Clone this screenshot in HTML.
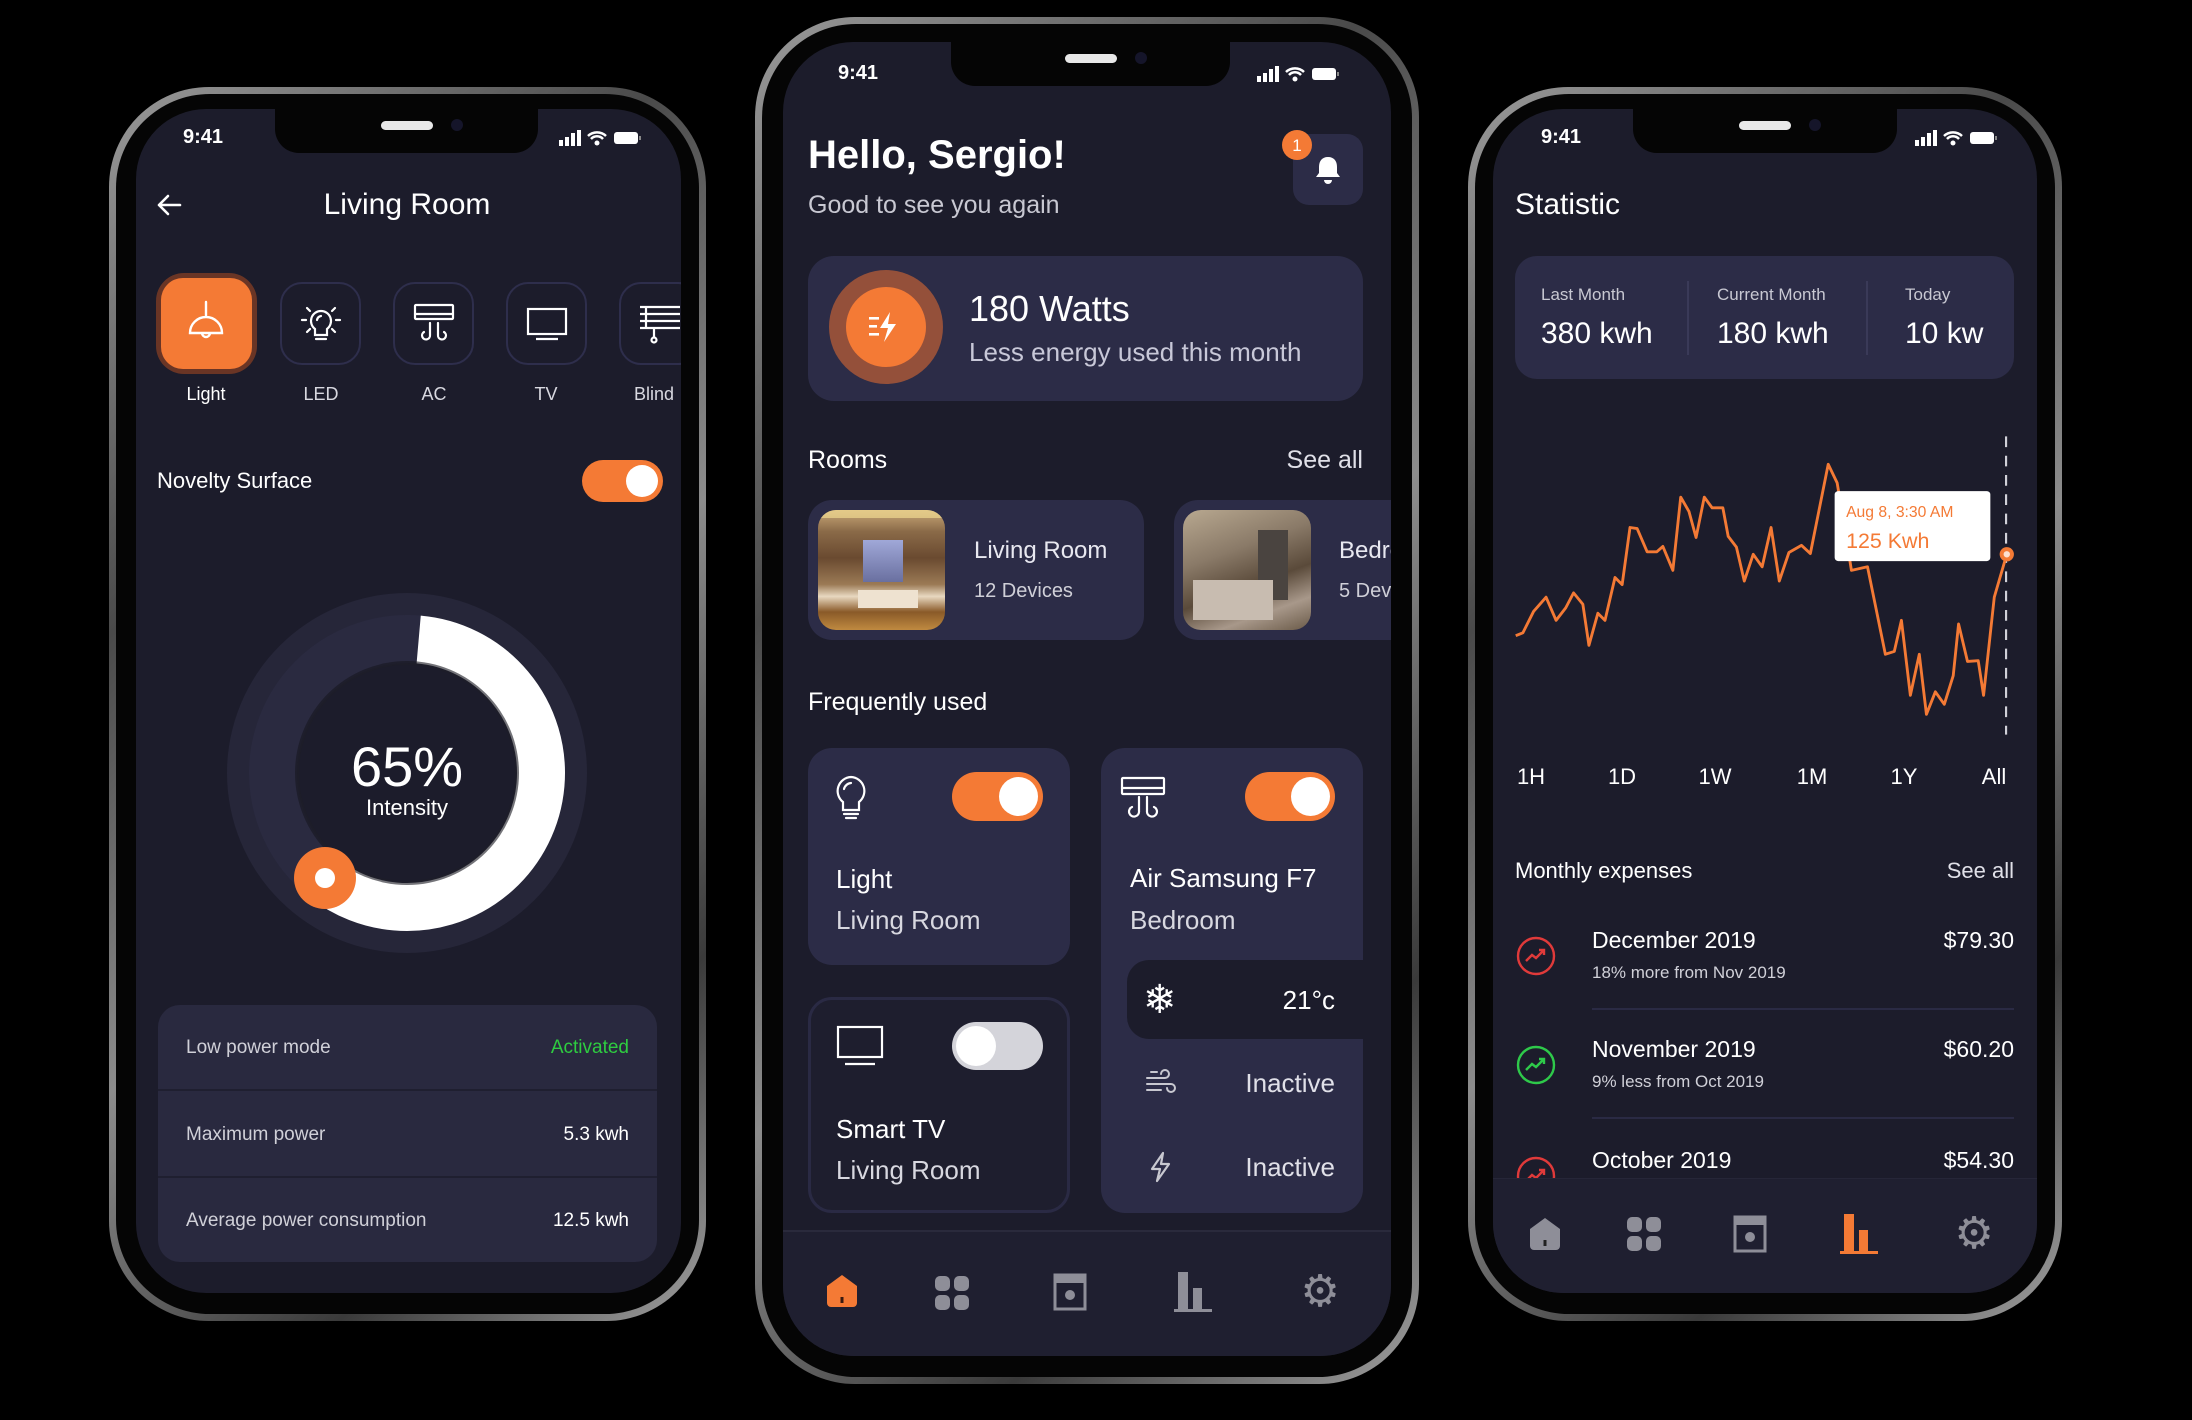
<!DOCTYPE html>
<html><head><meta charset="utf-8">
<style>
*{margin:0;padding:0;box-sizing:border-box}
body{width:2192px;height:1420px;background:#000;position:relative;overflow:hidden;font-family:"Liberation Sans",sans-serif;color:#fff}
.frame{position:absolute;border-radius:100px;background:linear-gradient(135deg,#9a9a9a,#4a4a4a 30%,#8c8c8c 55%,#3a3a3a 80%,#a0a0a0)}
.bez{position:absolute;inset:7px;border-radius:94px;background:#050505}
.scr{position:absolute;overflow:hidden;background:#1c1c2b;border-radius:70px}
.t{position:absolute;white-space:nowrap;line-height:1}
.c{transform:translateX(-50%)}
.r{text-align:right}
.notch{position:absolute;top:0;height:44px;background:#050505;border-radius:0 0 24px 24px}
.notch i{position:absolute;left:50%;top:12px;width:52px;height:9px;margin-left:-26px;background:#e8e8e8;border-radius:5px}
.notch b{position:absolute;left:50%;top:10px;margin-left:44px;width:12px;height:12px;border-radius:50%;background:#15152a}
.card{position:absolute;background:#2c2c47;border-radius:24px}
.tog{position:absolute;border-radius:30px;background:#f47a35}
.tog::after{content:"";position:absolute;right:5px;top:5px;bottom:5px;aspect-ratio:1;border-radius:50%;background:#fff}
.ib{position:absolute;border:2px solid #2e2e4c;border-radius:22px}
</style></head><body>

<!-- ============ LEFT PHONE ============ -->
<div class="frame" style="left:109px;top:87px;width:597px;height:1234px"><div class="bez"></div></div>
<div class="scr" style="left:136px;top:109px;width:545px;height:1184px">
  <div class="notch" style="left:139px;width:263px"><i></i><b></b></div>
  <div class="t c" style="left:67px;top:18px;font-size:20px;font-weight:bold">9:41</div>
  <svg style="position:absolute;left:423px;top:19px" width="86" height="20" viewBox="0 0 86 20"><rect x="0" y="12" width="4" height="6" fill="#fff"/><rect x="6" y="9" width="4" height="9" fill="#fff"/><rect x="12" y="5" width="4" height="13" fill="#fff"/><rect x="18" y="2" width="4" height="16" fill="#fff"/><path d="M29 8a13 13 0 0 1 18 0M32 11a8 8 0 0 1 12 0" stroke="#fff" stroke-width="2.5" fill="none"/><circle cx="38" cy="15" r="2.5" fill="#fff"/><rect x="55" y="4" width="24" height="12" rx="3" fill="#fff"/><rect x="80" y="8" width="2" height="4" fill="#888"/></svg>
  <svg style="position:absolute;left:20px;top:84px" width="26" height="24" viewBox="0 0 26 24"><path d="M24 12H3M12 3L3 12l9 9" stroke="#fff" stroke-width="2.6" fill="none" stroke-linecap="round" stroke-linejoin="round"/></svg>
  <div class="t c" style="left:271px;top:81px;font-size:30px">Living Room</div>

  <div style="position:absolute;left:20px;top:164px;width:101px;height:101px;border-radius:28px;background:#6a3525"></div>
  <div style="position:absolute;left:25px;top:169px;width:91px;height:91px;border-radius:22px;background:#f47a35"></div>
  <svg style="position:absolute;left:45px;top:189px" width="50" height="50" viewBox="0 0 50 50" fill="none" stroke="#fff" stroke-width="2.4" stroke-linecap="round"><path d="M25 4v14M9 35a16 16 0 0 1 32 0zM21 35a4 4 0 0 0 8 0"/></svg>
  <div class="ib" style="left:144px;top:173px;width:81px;height:83px"></div>
  <svg style="position:absolute;left:163px;top:193px" width="44" height="44" viewBox="0 0 44 44" fill="none" stroke="#fff" stroke-width="2.2" stroke-linecap="round"><path d="M22 9a10 10 0 0 0-6 18v6h12v-6a10 10 0 0 0-6-18zM17 37h10M3 18h4M37 18h4M8 6l3 3M36 6l-3 3M8 30l3-3M36 30l-3-3M22 14a5 5 0 0 0-4 4"/></svg>
  <div class="ib" style="left:257px;top:173px;width:81px;height:83px"></div>
  <svg style="position:absolute;left:276px;top:192px" width="44" height="44" viewBox="0 0 44 44" fill="none" stroke="#fff" stroke-width="2.2" stroke-linecap="round"><rect x="3" y="4" width="38" height="14" rx="1"/><path d="M3 13h38M18 22v12a4 4 0 1 1-6-3M26 22v12a4 4 0 1 0 6-3"/></svg>
  <div class="ib" style="left:370px;top:173px;width:81px;height:83px"></div>
  <svg style="position:absolute;left:389px;top:193px" width="44" height="44" viewBox="0 0 44 44" fill="none" stroke="#fff" stroke-width="2.2"><rect x="3" y="7" width="38" height="25"/><path d="M11 37h22"/></svg>
  <div class="ib" style="left:483px;top:173px;width:81px;height:83px"></div>
  <svg style="position:absolute;left:500px;top:193px" width="44" height="44" viewBox="0 0 44 44" fill="none" stroke="#fff" stroke-width="2.2"><path d="M4 5h40M4 12h40M4 19h40M4 26h40M10 5v22M18 26v10"/><circle cx="18" cy="38" r="2.5"/></svg>
  <div class="t c" style="left:70px;top:276px;font-size:18px">Light</div>
  <div class="t c" style="left:185px;top:276px;font-size:18px;color:#d8d8e0">LED</div>
  <div class="t c" style="left:298px;top:276px;font-size:18px;color:#d8d8e0">AC</div>
  <div class="t c" style="left:410px;top:276px;font-size:18px;color:#d8d8e0">TV</div>
  <div class="t" style="left:498px;top:276px;font-size:18px;color:#d8d8e0">Blind</div>

  <div class="t" style="left:21px;top:361px;font-size:22px">Novelty Surface</div>
  <div class="tog" style="left:446px;top:351px;width:81px;height:42px"></div>

  <svg style="position:absolute;left:81px;top:474px" width="380" height="380" viewBox="0 0 380 380">
    <circle cx="190" cy="190" r="180" fill="#262639"/>
    <circle cx="190" cy="190" r="134" fill="none" stroke="#2a2a40" stroke-width="48"/>
    <circle cx="190" cy="190" r="134" fill="none" stroke="#fff" stroke-width="48" stroke-dasharray="498 1000" transform="rotate(-85 190 190)"/>
    <circle cx="190" cy="190" r="112" fill="#17171f" opacity=".6"/>
    <circle cx="190" cy="190" r="108" fill="#1c1c2b"/>
    <circle cx="108" cy="295" r="31" fill="#f47a35"/>
    <circle cx="108" cy="295" r="10" fill="#fff"/>
  </svg>
  <div class="t c" style="left:271px;top:630px;font-size:56px">65%</div>
  <div class="t c" style="left:271px;top:688px;font-size:22px">Intensity</div>

  <div class="card" style="left:22px;top:896px;width:499px;height:257px;border-radius:22px;background:#29293f"></div>
  <div style="position:absolute;left:22px;top:980px;width:499px;height:2px;background:#1f1f30"></div>
  <div style="position:absolute;left:22px;top:1067px;width:499px;height:2px;background:#1f1f30"></div>
  <div class="t" style="left:50px;top:929px;font-size:19px;color:#d0d0d8">Low power mode</div>
  <div class="t r" style="right:52px;top:929px;font-size:19px;color:#2ecc40">Activated</div>
  <div class="t" style="left:50px;top:1016px;font-size:19px;color:#d0d0d8">Maximum power</div>
  <div class="t r" style="right:52px;top:1016px;font-size:19px">5.3 kwh</div>
  <div class="t" style="left:50px;top:1102px;font-size:19px;color:#d0d0d8">Average power consumption</div>
  <div class="t r" style="right:52px;top:1102px;font-size:19px">12.5 kwh</div>
</div>

<!-- ============ MIDDLE PHONE ============ -->
<div class="frame" style="left:755px;top:17px;width:664px;height:1367px"><div class="bez"></div></div>
<div class="scr" style="left:783px;top:42px;width:608px;height:1314px">
  <div class="notch" style="left:168px;width:279px"><i></i><b></b></div>
  <div class="t c" style="left:75px;top:21px;font-size:20px;font-weight:bold">9:41</div>
  <svg style="position:absolute;left:474px;top:22px" width="86" height="20" viewBox="0 0 86 20"><rect x="0" y="12" width="4" height="6" fill="#fff"/><rect x="6" y="9" width="4" height="9" fill="#fff"/><rect x="12" y="5" width="4" height="13" fill="#fff"/><rect x="18" y="2" width="4" height="16" fill="#fff"/><path d="M29 8a13 13 0 0 1 18 0M32 11a8 8 0 0 1 12 0" stroke="#fff" stroke-width="2.5" fill="none"/><circle cx="38" cy="15" r="2.5" fill="#fff"/><rect x="55" y="4" width="24" height="12" rx="3" fill="#fff"/><rect x="80" y="8" width="2" height="4" fill="#888"/></svg>

  <div class="t" style="left:25px;top:93px;font-size:40px;font-weight:bold">Hello, Sergio!</div>
  <div class="t" style="left:25px;top:151px;font-size:25px;color:#c8c8d2">Good to see you again</div>
  <div class="card" style="left:510px;top:92px;width:70px;height:71px;border-radius:16px"></div>
  <svg style="position:absolute;left:530px;top:112px" width="30" height="32" viewBox="0 0 30 32"><path d="M15 3c-6 0-9 4-9 10v6l-3 4h24l-3-4v-6c0-6-3-10-9-10z" fill="#fff"/><path d="M11 26a4 4 0 0 0 8 0z" fill="#fff"/></svg>
  <div style="position:absolute;left:499px;top:88px;width:30px;height:30px;border-radius:50%;background:#f47a35"></div>
  <div class="t c" style="left:514px;top:95px;font-size:17px">1</div>

  <div class="card" style="left:25px;top:214px;width:555px;height:145px;border-radius:26px"></div>
  <div style="position:absolute;left:46px;top:228px;width:114px;height:114px;border-radius:50%;background:#94503a"></div>
  <div style="position:absolute;left:63px;top:245px;width:80px;height:80px;border-radius:50%;background:#f47a35"></div>
  <svg style="position:absolute;left:85px;top:266px" width="38" height="38" viewBox="0 0 38 38" fill="#fff"><path d="M22 4L12 20h8l-4 14 12-18h-8z"/><rect x="1" y="9" width="10" height="2.6"/><rect x="1" y="17" width="8" height="2.6"/><rect x="1" y="25" width="10" height="2.6"/></svg>
  <div class="t" style="left:186px;top:249px;font-size:36px">180 Watts</div>
  <div class="t" style="left:186px;top:297px;font-size:26px;color:#c8c8d8">Less energy used this month</div>

  <div class="t" style="left:25px;top:406px;font-size:25px">Rooms</div>
  <div class="t r" style="right:28px;top:406px;font-size:25px;color:#e0e0e8">See all</div>

  <div class="card" style="left:25px;top:458px;width:336px;height:140px"></div>
  <div style="position:absolute;left:35px;top:468px;width:127px;height:120px;border-radius:18px;overflow:hidden;background:linear-gradient(180deg,#c9a878 0%,#8a6a48 18%,#6a4a30 40%,#9b7a55 62%,#e8d8c0 72%,#8a5a28 85%,#c08a40 100%)">
    <div style="position:absolute;left:45px;top:30px;width:40px;height:42px;background:linear-gradient(#a0a8d8,#6a70a0)"></div>
    <div style="position:absolute;left:0;top:0;width:127px;height:8px;background:#f0d890;opacity:.7"></div>
    <div style="position:absolute;left:40px;top:80px;width:60px;height:18px;background:#eee2d0"></div>
  </div>
  <div class="t" style="left:191px;top:497px;font-size:24px;color:#e8e8f0">Living Room</div>
  <div class="t" style="left:191px;top:539px;font-size:20px;color:#d0d0d8">12 Devices</div>

  <div class="card" style="left:391px;top:458px;width:300px;height:140px"></div>
  <div style="position:absolute;left:400px;top:468px;width:128px;height:120px;border-radius:18px;overflow:hidden;background:linear-gradient(160deg,#b8a890 0%,#8a7a68 35%,#5a4a3a 60%,#a8988a 80%,#6a5a48 100%)">
    <div style="position:absolute;left:75px;top:20px;width:30px;height:70px;background:#4a4440"></div>
    <div style="position:absolute;left:10px;top:70px;width:80px;height:40px;background:#c8bcb0"></div>
  </div>
  <div class="t" style="left:556px;top:497px;font-size:24px;color:#e8e8f0">Bedroom</div>
  <div class="t" style="left:556px;top:539px;font-size:20px;color:#d0d0d8">5 Devices</div>

  <div class="t" style="left:25px;top:648px;font-size:25px">Frequently used</div>

  <div class="card" style="left:25px;top:706px;width:262px;height:217px"></div>
  <svg style="position:absolute;left:50px;top:733px" width="36" height="46" viewBox="0 0 36 46" fill="none" stroke="#fff" stroke-width="2.2" stroke-linecap="round"><path d="M18 2a14 14 0 0 0-8 25v8h16v-8A14 14 0 0 0 18 2zM11 39h14M13 43h10M18 8a8 8 0 0 0-7 6"/></svg>
  <div class="tog" style="left:169px;top:730px;width:91px;height:49px"></div>
  <div class="t" style="left:53px;top:824px;font-size:26px">Light</div>
  <div class="t" style="left:53px;top:865px;font-size:26px;color:#d8d8e0">Living Room</div>

  <div style="position:absolute;left:25px;top:955px;width:262px;height:216px;border-radius:24px;border:3px solid #2a2a44;background:#1e1e2e"></div>
  <svg style="position:absolute;left:52px;top:982px" width="50" height="46" viewBox="0 0 50 46" fill="none" stroke="#fff" stroke-width="2.2"><rect x="3" y="3" width="44" height="30"/><path d="M10 40h30"/></svg>
  <div style="position:absolute;left:169px;top:980px;width:91px;height:48px;border-radius:30px;background:#d4d4da"></div>
  <div style="position:absolute;left:173px;top:984px;width:40px;height:40px;border-radius:50%;background:#fff"></div>
  <div class="t" style="left:53px;top:1074px;font-size:26px">Smart TV</div>
  <div class="t" style="left:53px;top:1115px;font-size:26px;color:#d8d8e0">Living Room</div>

  <div class="card" style="left:318px;top:706px;width:262px;height:465px"></div>
  <svg style="position:absolute;left:336px;top:733px" width="48" height="48" viewBox="0 0 48 48" fill="none" stroke="#fff" stroke-width="2.2" stroke-linecap="round"><rect x="3" y="3" width="42" height="16" rx="1"/><path d="M3 13h42M20 22v14a5 5 0 1 1-7-4M28 22v14a5 5 0 1 0 7-4"/></svg>
  <div class="tog" style="left:462px;top:730px;width:90px;height:49px"></div>
  <div class="t" style="left:347px;top:823px;font-size:26px">Air Samsung F7</div>
  <div class="t" style="left:347px;top:865px;font-size:26px;color:#d8d8e0">Bedroom</div>
  <div style="position:absolute;left:344px;top:918px;width:236px;height:79px;border-radius:22px 0 0 22px;background:#1c1c2b"></div>
  <div class="t" style="left:360px;top:938px;font-size:40px;font-family:'DejaVu Sans',sans-serif">❄</div>
  <div class="t r" style="right:56px;top:945px;font-size:26px">21°c</div>
  <svg style="position:absolute;left:362px;top:1027px" width="32" height="30" viewBox="0 0 32 30" fill="none" stroke="#c8c8d0" stroke-width="2" stroke-linecap="round"><path d="M2 9h18a4 4 0 1 0-4-4M2 15h24a4 4 0 1 1-4 4M2 21h14M6 3h6"/></svg>
  <div class="t r" style="right:56px;top:1028px;font-size:26px;color:#e0e0e8">Inactive</div>
  <svg style="position:absolute;left:365px;top:1109px" width="26" height="32" viewBox="0 0 26 32" fill="none" stroke="#c8c8d0" stroke-width="2.2" stroke-linejoin="round"><path d="M15 2L4 18h8l-3 12 12-17h-8z"/></svg>
  <div class="t r" style="right:56px;top:1112px;font-size:26px;color:#e0e0e8">Inactive</div>

  <div style="position:absolute;left:0;top:1188px;width:608px;height:2px;background:#2a2a3c"></div>
  <div style="position:absolute;left:0;top:1190px;width:608px;height:124px;background:#1f1f30"></div>
  <svg style="position:absolute;left:41px;top:1231px" width="36" height="36" viewBox="0 0 36 36"><path d="M18 2L3 13v17a4 4 0 0 0 4 4h22a4 4 0 0 0 4-4V13z" fill="#f47a35"/><rect x="16.5" y="24" width="3" height="6" fill="#3a1a10"/></svg>
  <svg style="position:absolute;left:151px;top:1233px" width="36" height="36" viewBox="0 0 36 36" fill="#8e8e98"><rect x="1" y="1" width="15" height="15" rx="5"/><rect x="20" y="1" width="15" height="15" rx="5"/><rect x="1" y="20" width="15" height="15" rx="5"/><rect x="20" y="20" width="15" height="15" rx="5"/></svg>
  <svg style="position:absolute;left:270px;top:1231px" width="34" height="38" viewBox="0 0 34 38"><rect x="2" y="2" width="30" height="34" fill="none" stroke="#8e8e98" stroke-width="3"/><rect x="2" y="2" width="30" height="8" fill="#8e8e98"/><circle cx="17" cy="22" r="5" fill="#8e8e98"/></svg>
  <svg style="position:absolute;left:389px;top:1228px" width="42" height="42" viewBox="0 0 42 42" fill="#8e8e98"><rect x="6" y="2" width="10" height="38"/><rect x="21" y="18" width="9" height="22"/><rect x="2" y="39" width="38" height="3"/></svg>
  <div class="t c" style="left:537px;top:1228px;font-size:44px;color:#8e8e98;font-family:'DejaVu Sans',sans-serif">⚙</div>
</div>

<!-- ============ RIGHT PHONE ============ -->
<div class="frame" style="left:1468px;top:87px;width:594px;height:1234px"><div class="bez"></div></div>
<div class="scr" style="left:1493px;top:109px;width:544px;height:1184px">
  <div class="notch" style="left:140px;width:264px"><i></i><b></b></div>
  <div class="t c" style="left:68px;top:18px;font-size:20px;font-weight:bold">9:41</div>
  <svg style="position:absolute;left:422px;top:19px" width="86" height="20" viewBox="0 0 86 20"><rect x="0" y="12" width="4" height="6" fill="#fff"/><rect x="6" y="9" width="4" height="9" fill="#fff"/><rect x="12" y="5" width="4" height="13" fill="#fff"/><rect x="18" y="2" width="4" height="16" fill="#fff"/><path d="M29 8a13 13 0 0 1 18 0M32 11a8 8 0 0 1 12 0" stroke="#fff" stroke-width="2.5" fill="none"/><circle cx="38" cy="15" r="2.5" fill="#fff"/><rect x="55" y="4" width="24" height="12" rx="3" fill="#fff"/><rect x="80" y="8" width="2" height="4" fill="#888"/></svg>
  <div class="t" style="left:22px;top:81px;font-size:30px">Statistic</div>

  <div class="card" style="left:22px;top:147px;width:499px;height:123px;border-radius:22px"></div>
  <div style="position:absolute;left:194px;top:172px;width:2px;height:74px;background:#3a3a58"></div>
  <div style="position:absolute;left:373px;top:172px;width:2px;height:74px;background:#3a3a58"></div>
  <div class="t" style="left:48px;top:177px;font-size:17px;color:#c8c8d2">Last Month</div>
  <div class="t" style="left:224px;top:177px;font-size:17px;color:#c8c8d2">Current Month</div>
  <div class="t" style="left:412px;top:177px;font-size:17px;color:#c8c8d2">Today</div>
  <div class="t" style="left:48px;top:210px;font-size:30px">380 kwh</div>
  <div class="t" style="left:224px;top:210px;font-size:30px">180 kwh</div>
  <div class="t" style="left:412px;top:210px;font-size:30px">10 kw</div>

  <svg style="position:absolute;left:-13px;top:131px" width="560" height="560" viewBox="0 0 1568 1568">
    <path d="M1473 550V1385" stroke="#d0d0d8" stroke-width="6" stroke-dasharray="30 24"/>
    <polyline fill="none" stroke="#f47a35" stroke-width="8" stroke-linejoin="round" points="100,1108 120,1100 150,1040 185,1000 213,1065 240,1030 262,988 288,1020 305,1135 330,1045 350,1065 378,945 398,965 420,805 440,808 468,873 495,873 512,858 540,925 562,720 585,760 605,833 628,720 650,750 680,750 695,830 718,860 740,955 765,880 790,915 815,805 838,955 865,875 900,855 925,878 975,628 1000,680 1020,800 1040,925 1085,915 1135,1160 1160,1152 1180,1065 1205,1275 1230,1160 1250,1328 1275,1265 1300,1300 1325,1220 1340,1075 1365,1180 1395,1178 1410,1275 1440,1000 1475,880"/>
    <rect x="993" y="703" width="436" height="196" rx="10" fill="#fff"/>
    <text x="1025" y="775" font-family="Liberation Sans" font-size="44" fill="#f47a35">Aug 8, 3:30 AM</text>
    <text x="1025" y="862" font-family="Liberation Sans" font-size="60" fill="#f47a35">125 Kwh</text>
    <circle cx="1475" cy="880" r="20" fill="#f47a35"/><circle cx="1475" cy="880" r="9" fill="#fde0d0"/>
  </svg>
  <div class="t c" style="left:38px;top:657px;font-size:22px">1H</div>
  <div class="t c" style="left:129px;top:657px;font-size:22px">1D</div>
  <div class="t c" style="left:222px;top:657px;font-size:22px">1W</div>
  <div class="t c" style="left:319px;top:657px;font-size:22px">1M</div>
  <div class="t c" style="left:411px;top:657px;font-size:22px">1Y</div>
  <div class="t c" style="left:501px;top:657px;font-size:22px">All</div>

  <div class="t" style="left:22px;top:751px;font-size:22px">Monthly expenses</div>
  <div class="t r" style="right:23px;top:751px;font-size:22px;color:#e0e0e8">See all</div>

  <svg style="position:absolute;left:23px;top:827px" width="40" height="40" viewBox="0 0 40 40" fill="none" stroke="#e03a3a" stroke-width="2.4"><circle cx="20" cy="20" r="18"/><path d="M10 25l6-6 4 3 8-8M23 14h5v5"/></svg>
  <div class="t" style="left:99px;top:820px;font-size:23px">December 2019</div>
  <div class="t" style="left:99px;top:855px;font-size:17px;color:#d0d0d8">18% more from Nov 2019</div>
  <div class="t r" style="right:23px;top:820px;font-size:23px">$79.30</div>
  <div style="position:absolute;left:99px;top:899px;width:422px;height:2px;background:#2a2a44"></div>

  <svg style="position:absolute;left:23px;top:936px" width="40" height="40" viewBox="0 0 40 40" fill="none" stroke="#2ec94a" stroke-width="2.4"><circle cx="20" cy="20" r="18"/><path d="M10 25l6-6 4 3 8-8M23 14h5v5"/></svg>
  <div class="t" style="left:99px;top:929px;font-size:23px">November 2019</div>
  <div class="t" style="left:99px;top:964px;font-size:17px;color:#d0d0d8">9% less from Oct 2019</div>
  <div class="t r" style="right:23px;top:929px;font-size:23px">$60.20</div>
  <div style="position:absolute;left:99px;top:1008px;width:422px;height:2px;background:#2a2a44"></div>

  <div style="position:absolute;left:0;top:1040px;width:544px;height:29px;overflow:hidden">
    <svg style="position:absolute;left:23px;top:7px" width="40" height="40" viewBox="0 0 40 40" fill="none" stroke="#e03a3a" stroke-width="2.4"><circle cx="20" cy="20" r="18"/><path d="M10 25l6-6 4 3 8-8M23 14h5v5"/></svg>
  </div>
  <div class="t" style="left:99px;top:1040px;font-size:23px">October 2019</div>
  <div class="t r" style="right:23px;top:1040px;font-size:23px">$54.30</div>

  <div style="position:absolute;left:0;top:1069px;width:544px;height:115px;background:#1f1f30;border-top:1px solid #262638"></div>
  <svg style="position:absolute;left:34px;top:1107px" width="36" height="36" viewBox="0 0 36 36"><path d="M18 2L3 13v17a4 4 0 0 0 4 4h22a4 4 0 0 0 4-4V13z" fill="#8e8e98"/><rect x="16.5" y="24" width="3" height="6" fill="#222"/></svg>
  <svg style="position:absolute;left:133px;top:1107px" width="36" height="36" viewBox="0 0 36 36" fill="#8e8e98"><rect x="1" y="1" width="15" height="15" rx="5"/><rect x="20" y="1" width="15" height="15" rx="5"/><rect x="1" y="20" width="15" height="15" rx="5"/><rect x="20" y="20" width="15" height="15" rx="5"/></svg>
  <svg style="position:absolute;left:240px;top:1106px" width="34" height="38" viewBox="0 0 34 38"><rect x="2" y="2" width="30" height="34" fill="none" stroke="#8e8e98" stroke-width="3"/><rect x="2" y="2" width="30" height="8" fill="#8e8e98"/><circle cx="17" cy="22" r="5" fill="#8e8e98"/></svg>
  <svg style="position:absolute;left:345px;top:1103px" width="42" height="42" viewBox="0 0 42 42" fill="#f47a35"><rect x="6" y="2" width="10" height="38"/><rect x="21" y="18" width="9" height="22"/><rect x="2" y="39" width="38" height="3"/></svg>
  <div class="t c" style="left:481px;top:1103px;font-size:44px;color:#8e8e98;font-family:'DejaVu Sans',sans-serif">⚙</div>
</div>
</body></html>
